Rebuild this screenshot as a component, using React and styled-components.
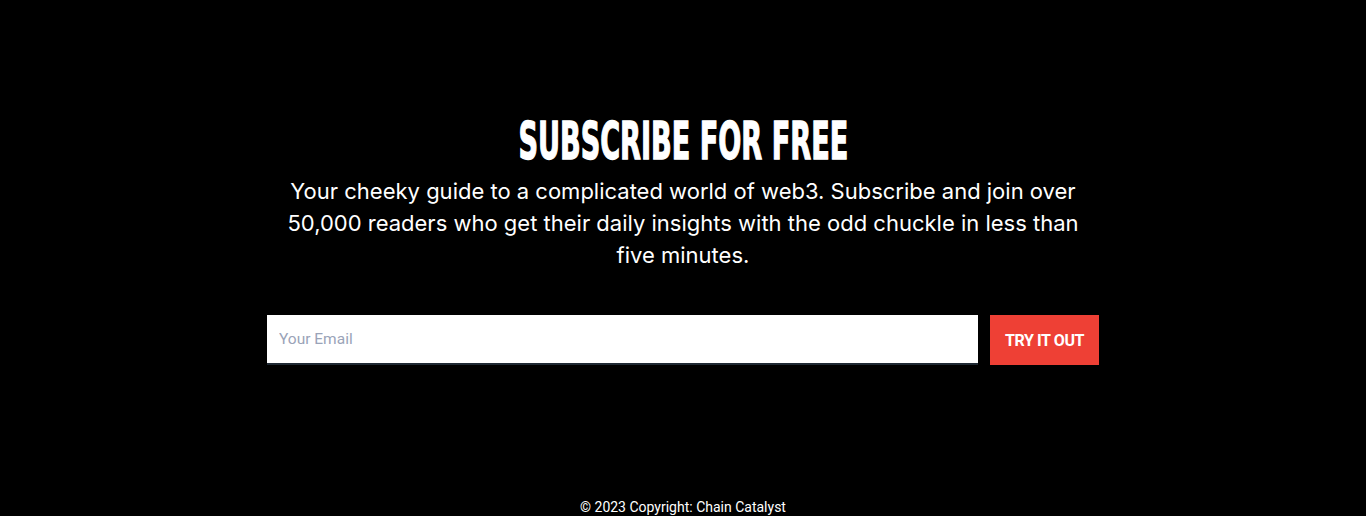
import React from 'react';
import styled, { createGlobalStyle } from 'styled-components';

const GlobalStyle = createGlobalStyle`
  html, body {
    margin: 0;
    padding: 0;
    background-color: #000;
  }
  body {
    font-family: Roboto, "Liberation Sans", sans-serif;
  }
`;

const Page = styled('div')`
  min-height: 516px;
  background-color: #000;
  color: #fff;
  display: flex;
  flex-direction: column;
  align-items: center;
`;

const Section = styled('section')`
  width: 832px;
  padding-top: 113px;
  display: flex;
  flex-direction: column;
  align-items: center;
`;

const Title = styled('h2')`
  margin: 0;
  font-family: "DejaVu Sans Condensed", "DejaVu Sans", sans-serif;
  font-weight: 700;
  font-size: 52px;
  line-height: 56px;
  text-transform: uppercase;
  -webkit-text-stroke: 1.3px #fff;
  transform: scaleX(0.58);
  white-space: nowrap;
`;

const Lead = styled('p')`
  margin: 6px 0 0;
  font-family: Inter, "Noto Sans", sans-serif;
  font-size: 22px;
  line-height: 32px;
  text-align: center;
`;

const Form = styled('form')`
  margin-top: 44px;
  width: 100%;
  display: flex;
  align-items: flex-start;
  gap: 12px;
`;

const EmailInput = styled('input')`
  flex: 1;
  height: 50px;
  box-sizing: border-box;
  margin: 0;
  padding: 0 12px;
  border: none;
  border-bottom: 2px solid #1f2933;
  background: #fff;
  font-family: Roboto, sans-serif;
  font-size: 15.5px;
  color: #333;
  outline: none;
  &::placeholder {
    color: #9aa3b8;
  }
`;

const SubmitButton = styled('button')`
  width: 109px;
  height: 50px;
  border: none;
  background-color: #ee4035;
  color: #fff;
  font-family: Roboto, sans-serif;
  font-weight: 700;
  font-size: 16px;
  text-transform: uppercase;
  letter-spacing: -0.4px;
  cursor: pointer;
`;

const Footer = styled('footer')`
  margin-top: auto;
  padding: 0 0 1px;
  font-family: Roboto, sans-serif;
  font-size: 14px;
  line-height: 16px;
  text-align: center;
`;

const App = () => {
  return (
    <Page>
      <GlobalStyle />
      <Section>
        <Title>Subscribe for free</Title>
        <Lead>
          Your cheeky guide to a complicated world of web3. Subscribe and join over
          50,000 readers who get their daily insights with the odd chuckle in less than
          five minutes.
        </Lead>
        <Form onSubmit={e => e.preventDefault()}>
          <EmailInput type="email" placeholder="Your Email" />
          <SubmitButton type="submit">Try it out</SubmitButton>
        </Form>
      </Section>
      <Footer>© 2023 Copyright: Chain Catalyst</Footer>
    </Page>
  );
};

export default App;
